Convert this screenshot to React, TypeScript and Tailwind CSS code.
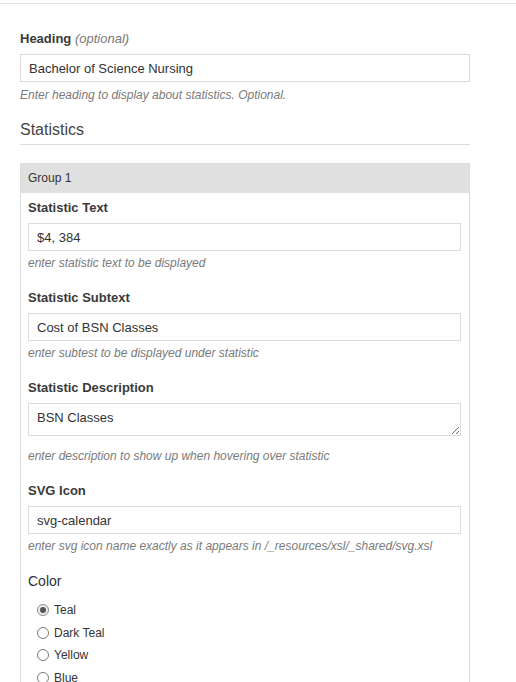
import React from "react";

const FONT = "font-['Liberation_Sans',Arial,Helvetica,sans-serif]";

const COLORS = ["Teal", "Dark Teal", "Yellow", "Blue"];

function Field({
    label,
    value,
    hint,
    multiline,
    first,
}: {
    label: string;
    value: string;
    hint: string;
    multiline?: boolean;
    first?: boolean;
}) {
    return (
        <div className={first ? "" : "mt-[18px]"}>
            <label className="block pt-[1px] text-[13px] leading-[16px] font-bold text-[#3a3a3a]">{label}</label>
            {multiline ? (
                <textarea
                    defaultValue={value}
                    className="mt-[7px] block h-[33px] w-full border border-[#dcdcdc] px-2 pt-[6px] text-[13px] leading-[16px] text-[#333] outline-none"
                />
            ) : (
                <input
                    defaultValue={value}
                    className="mt-[7px] block h-[28px] w-full border border-[#dcdcdc] px-2 text-[13px] text-[#333] outline-none"
                />
            )}
            <p className={`${multiline ? "mt-[12px]" : "mt-[4px]"} text-[12px] leading-[16px] italic text-[#7a7a7a]`}>
                {hint}
            </p>
        </div>
    );
}

export default function App() {
    const selected = "Teal";

    return (
        <div className={`min-h-screen bg-white ${FONT}`}>
            <div className="h-[4px] border-b border-[#e6e6e6]" />

            <div className="px-5 pt-[26px]">
                <div className="w-[450px]">
                    {/* Heading */}
                    <label className="block pt-[1px] text-[13px] leading-[16px] font-bold text-[#3a3a3a]">
                        Heading <span className="font-normal italic text-[#777]">(optional)</span>
                    </label>
                    <input
                        defaultValue="Bachelor of Science Nursing"
                        className="mt-[7px] block h-[28px] w-full border border-[#dcdcdc] px-2 text-[13px] text-[#333] outline-none"
                    />
                    <p className="mt-[5px] text-[12px] leading-[16px] italic text-[#7a7a7a]">
                        Enter heading to display about statistics. Optional.
                    </p>

                    <h2 className="mt-[17px] border-b border-[#dcdcdc] pb-[4px] text-[16px] leading-[20px] text-[#444]">
                        Statistics
                    </h2>

                    {/* Group */}
                    <div className="mt-[18px] border border-[#dcdcdc]">
                        <div className="h-[29px] bg-[#e0e0e0] pl-[7px] text-[12px] leading-[29px] text-[#333]">Group 1</div>
                        <div className="pl-[7px] pr-[8px] pt-[6px] pb-6">
                            <Field first label="Statistic Text" value="$4, 384" hint="enter statistic text to be displayed" />
                            <Field
                                label="Statistic Subtext"
                                value="Cost of BSN Classes"
                                hint="enter subtest to be displayed under statistic"
                            />
                            <Field
                                multiline
                                label="Statistic Description"
                                value="BSN Classes"
                                hint="enter description to show up when hovering over statistic"
                            />
                            <Field
                                label="SVG Icon"
                                value="svg-calendar"
                                hint="enter svg icon name exactly as it appears in /_resources/xsl/_shared/svg.xsl"
                            />

                            <div className="mt-[19px] text-[14px] leading-[16px] text-[#333]">Color</div>
                            <div className="mt-[10px]">
                                {COLORS.map((c) => (
                                    <label key={c} className="flex h-[22.5px] items-center pl-[9px] text-[12px] text-[#333]">
                                        {c === selected ? (
                                            <span className="flex h-[12px] w-[12px] items-center justify-center rounded-full border border-[#8a8a8a] bg-[#eee]">
                                                <span className="h-[6px] w-[6px] rounded-full bg-[#555]" />
                                            </span>
                                        ) : (
                                            <span className="h-[12px] w-[12px] rounded-full border border-[#7a7a7a] bg-white" />
                                        )}
                                        <span className="ml-[5px]">{c}</span>
                                    </label>
                                ))}
                            </div>
                        </div>
                    </div>
                </div>
            </div>
        </div>
    );
}
